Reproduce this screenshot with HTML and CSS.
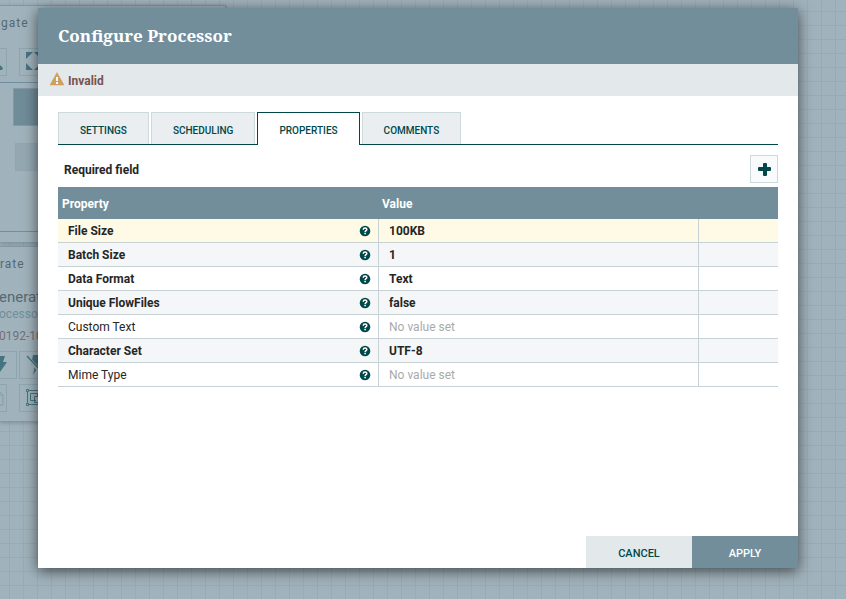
FILE: index.html
```html
<!DOCTYPE html>
<html lang="en">
<head>
<meta charset="utf-8">
<title>Configure Processor</title>
<link rel="stylesheet" href="styles.css">
</head>
<body>
<svg class="defs" aria-hidden="true">
  <symbol id="help" viewBox="0 0 12 12"><circle cx="6" cy="6" r="5.3" fill="#004849"/><path d="M4.200 4.700C4.300 2.600 7.800 2.600 7.800 4.500C7.800 5.700 6.100 5.700 6.100 7.100" fill="none" stroke="#fff" stroke-width="1.500"/><path d="M5.300 7.800h1.600v1.500H5.300z" fill="#fff"/></symbol>
</svg>

<div class="canvas" aria-hidden="true">
  <section class="palette navigate">
    <h2>gate</h2>
    <div class="tools">
      <span class="tool"><svg width="28" height="28" viewBox="0 0 28 28"><path d="M18 14l6 6-1 2h-2l-3-5z"/></svg></span>
      <span class="tool"><svg width="28" height="28" viewBox="0 0 28 28"><path d="M7 4h7l-7 7zM7 22v-7l7 7zM22 4v7l-7-7zM22 22h-7l7-7z"/></svg></span>
    </div>
    <div class="birdseye"><i class="group"></i><i class="node"></i></div>
  </section>
  <section class="palette operate">
    <h2>rate</h2>
    <div class="name">enerat</div>
    <div class="kind">ocessor</div>
    <div class="uuid">0192-10</div>
    <div class="tools upper">
      <span class="tool wide"><svg width="28" height="28" viewBox="0 0 28 28"><path d="M11 5h7l-2 6h4l-9 13 2-9h-4z"/></svg></span>
      <span class="tool"><svg width="28" height="28" viewBox="0 0 28 28"><path d="M14 4h7l-2 6h4l-9 14 2-10h-4z"/><path d="M8 6l15 16" stroke="#a0b2bb" stroke-width="4"/><path d="M8 5l15 16" stroke="#457480" stroke-width="1.500"/></svg></span>
    </div>
    <div class="tools lower">
      <span class="tool faded"><svg width="28" height="28" viewBox="0 0 28 28"><path class="line" d="M12 6h7l5 5v10H12M19 6v5h5"/></svg></span>
      <span class="tool"><svg width="28" height="28" viewBox="0 0 28 28"><path class="line" d="M8.500 6v15M9 6.500h14M9 20.500h14M17 16.500h-5.500v-7h7v3M15.500 12.500h6v6h-6z"/><path class="corner" d="M7.500 5.500h2v2h-2zM7.500 19.500h2v2h-2zM21.500 5.500h2v2h-2zM21.500 19.500h2v2h-2z"/></svg></span>
    </div>
  </section>
</div>

<main class="dialog" role="dialog" aria-labelledby="title">
  <header class="head"><h1 id="title">Configure Processor</h1></header>
  <div class="status">
    <svg width="14" height="14" viewBox="0 0 14 14" aria-hidden="true"><path d="M7 .5L14 13H0z" fill="#cf9f5d" stroke="#cf9f5d" stroke-linejoin="round" stroke-width=".5"/><path d="M6 5h2v4H6zM6 10h2v2H6z" fill="#fff"/></svg>
    <span>Invalid</span>
  </div>
  <div class="content">
    <div class="tabs" role="tablist">
      <button role="tab">SETTINGS</button>
      <button role="tab">SCHEDULING</button>
      <button role="tab" aria-selected="true">PROPERTIES</button>
      <button role="tab">COMMENTS</button>
    </div>
    <div class="toolbar">
      <span>Required field</span>
      <button class="add" aria-label="Add property"><svg width="14" height="14" viewBox="0 0 14 14"><path d="M6 1h3q1 0 1 1v3h3q1 0 1 1v2q0 1-1 1h-3v4q0 1-1 1H7q-1 0-1-1V9H2q-1 0-1-1V6q0-1 1-1h4V2q0-1 1-1z" fill="#004849"/></svg></button>
    </div>
    <table>
      <colgroup><col class="c1"><col class="c2"><col class="c3"></colgroup>
      <thead><tr><th>Property</th><th>Value</th><th></th></tr></thead>
      <tbody>
        <tr class="active"><td><div><b>File Size</b><svg><use href="#help"/></svg></div></td><td><b>100KB</b></td><td></td></tr>
        <tr><td><div><b>Batch Size</b><svg><use href="#help"/></svg></div></td><td><b>1</b></td><td></td></tr>
        <tr><td><div><b>Data Format</b><svg><use href="#help"/></svg></div></td><td><b>Text</b></td><td></td></tr>
        <tr><td><div><b>Unique FlowFiles</b><svg><use href="#help"/></svg></div></td><td><b>false</b></td><td></td></tr>
        <tr><td><div>Custom Text<svg><use href="#help"/></svg></div></td><td class="unset">No value set</td><td></td></tr>
        <tr><td><div><b>Character Set</b><svg><use href="#help"/></svg></div></td><td><b>UTF-8</b></td><td></td></tr>
        <tr><td><div>Mime Type<svg><use href="#help"/></svg></div></td><td class="unset">No value set</td><td></td></tr>
      </tbody>
    </table>
  </div>
  <footer class="actions">
    <button class="cancel">CANCEL</button>
    <button class="apply">APPLY</button>
  </footer>
</main>
</body>
</html>
```
FILE: styles.css
```css
* { box-sizing: border-box; }

body {
  margin: 0;
  height: 100vh;
  padding: 8px 48px 31px 38px;
  display: flex;
  overflow: hidden;
  color: #262626;
  background-color: #a0b2bb;
  background-image:
    linear-gradient(90deg, #97abb4 1px, transparent 1px),
    linear-gradient(#97abb4 1px, transparent 1px);
  background-size: 14px 14px;
  background-position: 9px 11px;
  font: 12px/16px Roboto, sans-serif;
}

h1, h2 { margin: 0; }
button { font: inherit; cursor: pointer; border-radius: 0; }
.defs { position: absolute; width: 0; height: 0; }

/* canvas behind the dialog */
.canvas {
  position: absolute;
  inset: 5px auto auto 0;
  width: 226px;
  display: flex;
  flex-direction: column;
  gap: 3px;
}
.palette {
  background: #a0b2bb;
  border: 1px solid #8299a4;
  border-left: 0;
  box-shadow: 0 1px 4px rgba(0, 0, 0, .2);
}
.palette h2 {
  padding: 9px 0 0 1px;
  color: #566970;
  font-size: 12px;
  line-height: 16px;
  font-weight: 400;
  letter-spacing: 1px;
}
.navigate { height: 238px; }
.operate { height: 176px; color: #566970; }
.operate h2 { padding-left: 0; }
.navigate .tools { padding-top: 17px; }
.tools { display: flex; gap: 12px; margin-left: -21px; }
.tool { width: 28px; height: 28px; border: 1px solid #8ca5af; flex: none; }
.tool svg { display: block; margin: -1px; fill: #457480; }
.tool .line, .tool .corner { fill: none; stroke: #457480; }
.tool .corner { fill: #a0b2bb; }
.faded svg { opacity: .3; }
.birdseye {
  height: 150px;
  margin-top: 6px;
  padding: 5px 0 0 13px;
  border: solid #708f9c;
  border-width: 1px 0;
}
.birdseye i { display: block; }
.group { height: 38px; background: #708c98; border: 1px solid #819ba6; }
.node { height: 28px; margin: 17px 0 0 2px; background: #94a8b2; border: 1px solid #91a6b0; }
.name { margin: 16px 0 0 -1px; font-size: 15px; line-height: 18px; }
.kind { margin-left: -1px; line-height: 16px; color: #708f9c; }
.uuid { margin: 6px 0 0 -1px; line-height: 16px; color: #766f75; }
.upper { margin-top: 7px; gap: 2px; }
.upper .wide { width: 38px; padding-left: 8px; }
.lower { margin-top: 5px; }

/* dialog */
.dialog {
  position: relative;
  flex: 1;
  min-width: 0;
  display: flex;
  flex-direction: column;
  background: #fff;
  box-shadow: 0 3px 13px rgba(0, 0, 0, .6);
}
.head {
  height: 56px;
  padding: 0 20px;
  display: flex;
  align-items: center;
  background: #728e9b;
  color: #fff;
}
.head h1 { font: 700 17px/24px "Roboto Slab", "Noto Serif", serif; }
.status {
  height: 32px;
  padding: 2px 12px 0;
  display: flex;
  align-items: center;
  gap: 4px;
  background: #e3e8eb;
  color: #775351;
  font-weight: 700;
}
.status svg { margin-bottom: 5px; }
.content { flex: 1; padding: 16px 20px 0; }
.tabs { display: flex; gap: 2px; border-bottom: 1px solid #004849; }
.tabs button {
  height: 32px;
  padding: 4px 21px 0;
  border: 1px solid #ccdadb;
  border-bottom: 0;
  background: #eaeef0;
  color: #004849;
  font-size: 10px;
  font-weight: 500;
}
.tabs [aria-selected] {
  height: 33px;
  margin-bottom: -1px;
  background: #fff;
  border-color: #004849;
}
.toolbar {
  height: 42px;
  padding: 6px 0 0 6px;
  display: flex;
  align-items: center;
  justify-content: space-between;
  font-weight: 700;
}
.toolbar span { padding-top: 2px; }
.add {
  width: 28px;
  height: 28px;
  padding: 0;
  display: grid;
  place-items: center;
  border: 1px solid #ccdadb;
  background: #f9fafb;
}
table { width: 100%; table-layout: fixed; border-spacing: 0; }
.c1 { width: 321px; }
.c2 { width: 320px; }
th {
  height: 32px;
  padding: 2px 4px 0;
  text-align: left;
  background: #728e9b;
  color: #fff;
  font-weight: 700;
}
th + th { padding-left: 3px; }
td {
  height: 24px;
  padding: 0 10px;
  border: solid #c7d2d7;
  border-width: 0 1px 1px 0;
}
td:last-child { border-right: 0; }
td:first-child { padding-right: 7px; }
tbody tr:nth-child(even) { background: #f4f6f7; }
tbody .active { background: #fffae6; }
td div { display: flex; align-items: center; justify-content: space-between; }
td svg { width: 12px; height: 12px; }
b { font-weight: 700; }
.unset { color: #aaa; }
.actions { display: flex; justify-content: flex-end; }
.actions button { width: 106px; height: 32px; padding: 3px 0 0; border: 0; font-size: 11px; font-weight: 500; }
.cancel { background: #e3e8eb; color: #004849; }
.apply { background: #728e9b; color: #fff; }
```
